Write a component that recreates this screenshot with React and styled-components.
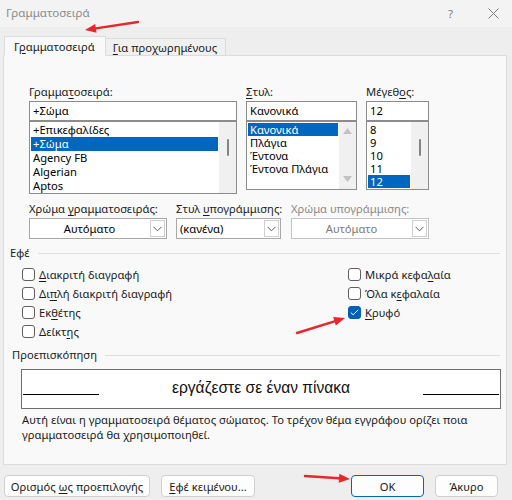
import React from 'react';
import styled, { createGlobalStyle } from 'styled-components';

const GlobalStyle = createGlobalStyle`
  html, body {
    margin: 0;
    padding: 0;
  }
  body {
    font-family: "Noto Sans", "Open Sans", sans-serif;
    font-size: 11.2px;
    color: #1b1b1b;
  }
`;

const Window = styled.div`
  position: relative;
  width: 512px;
  height: 500px;
  background: #eeeeee;
  display: flex;
  flex-direction: column;
  overflow: hidden;
`;

const TitleBar = styled.div`
  height: 27px;
  background: #f3f3f3;
  display: flex;
  align-items: center;
  padding-left: 6px;
  color: #8b8b8b;
  font-size: 11.6px;
`;

const TitleText = styled.div`
  flex: 1;
  line-height: 14px;
  margin-top: -1px;
`;

const TitleButtons = styled.div`
  display: flex;
  align-items: center;
  gap: 35px;
  padding-right: 13px;
  color: #7d7d7d;
`;

const TabStrip = styled.div`
  display: flex;
  align-items: flex-end;
  padding: 8px 0 0 4px;
  height: 20px;
`;

const Tab = styled.div`
  position: relative;
  z-index: 1;
  height: ${p => (p.$active ? '20px' : '18px')};
  line-height: ${p => (p.$active ? '20px' : '18px')};
  padding: 0 ${p => (p.$active ? '10px' : '8px')} 0 ${p => (p.$active ? '9px' : '7px')};
  background: ${p => (p.$active ? '#f9f9f9' : '#f0f0f0')};
  border: 1px solid #dcdcdc;
  border-bottom: ${p => (p.$active ? '1px solid #f9f9f9' : '1px solid #dcdcdc')};
  border-left: ${p => (p.$active ? '1px solid #dcdcdc' : 'none')};
  margin-bottom: -1px;
  box-sizing: border-box;
  color: #1b1b1b;
`;

const Key = styled.span`
  text-decoration: underline;
  text-underline-offset: 2px;
`;

const Panel = styled.div`
  margin: 0 5px 0 3px;
  height: 410px;
  box-sizing: border-box;
  border: 1px solid #dcdcdc;
  background: #f9f9f9;
  padding-top: 29px;
  display: flex;
  flex-direction: column;
`;

const FieldRow = styled.div`
  display: flex;
  padding-left: 25px;
  margin-top: ${p => p.$top || 0}px;
  gap: 9px;
`;

const Field = styled.div`
  width: ${p => p.$w}px;
  margin-right: ${p => p.$mr || 0}px;
  display: flex;
  flex-direction: column;
`;

const Label = styled.div`
  height: 14px;
  line-height: 14px;
  margin-bottom: 2px;
  color: ${p => (p.$disabled ? '#8a8a8a' : '#1b1b1b')};
  white-space: nowrap;
`;

const TextBox = styled.div`
  height: 20px;
  box-sizing: border-box;
  border: 1px solid #8c8c8c;
  background: #ffffff;
  line-height: 18px;
  padding-left: 3px;
  color: #000;
`;

const ListBox = styled.div`
  height: ${p => p.$h}px;
  box-sizing: border-box;
  border: 1px solid #8c8c8c;
  background: #ffffff;
  display: flex;
`;

const ListItems = styled.div`
  flex: 1;
  padding: 1px 1px 0 1px;
  overflow: hidden;
`;

const ListItem = styled.div`
  height: ${p => p.$h}px;
  line-height: ${p => p.$h}px;
  padding-left: 2px;
  background: ${p => (p.$selected ? '#0067c0' : 'transparent')};
  color: ${p => (p.$selected ? '#ffffff' : '#000000')};
  white-space: nowrap;
`;

const ScrollTrack = styled.div`
  width: 17px;
  background: #f0f0f0;
  display: flex;
  flex-direction: column;
  align-items: center;
  justify-content: ${p => (p.$arrows ? 'space-between' : 'flex-start')};
  padding: ${p => (p.$arrows ? '6px 0 7px' : '17px 0 0')};
  box-sizing: border-box;
`;

const Thumb = styled.div`
  width: 2px;
  height: 17px;
  background: #858585;
  border-radius: 1px;
`;

const Select = styled.div`
  height: 21px;
  box-sizing: border-box;
  border: 1px solid ${p => (p.$disabled ? '#c4c4c4' : '#a8a8a8')};
  background: #ffffff;
  display: flex;
  align-items: stretch;
`;

const SelectValue = styled.div`
  flex: 1;
  line-height: 19px;
  text-align: ${p => (p.$center ? 'center' : 'left')};
  padding-left: ${p => (p.$center ? '0' : '3px')};
  color: ${p => (p.$disabled ? '#7a7a7a' : '#000')};
`;

const ChevronBox = styled.div`
  width: 15px;
  margin: 1px;
  box-sizing: border-box;
  border: 1px solid #cfcfcf;
  display: flex;
  align-items: center;
  justify-content: center;
`;

const GroupHeader = styled.div`
  display: flex;
  align-items: center;
  gap: 8px;
  height: 14px;
  line-height: 14px;
  margin: ${p => p.$top}px 6px 0 ${p => p.$left}px;
`;

const GroupLine = styled.div`
  flex: 1;
  height: 1px;
  background: #dedede;
`;

const EffectsGrid = styled.div`
  display: grid;
  grid-template-columns: 326px auto;
  padding-left: 18px;
  margin-top: 5px;
`;

const CheckColumn = styled.div`
  display: flex;
  flex-direction: column;
`;

const CheckRow = styled.div`
  height: 19px;
  display: flex;
  align-items: center;
  gap: 4px;
  white-space: nowrap;
`;

const Box = styled.div`
  width: 13px;
  height: 13px;
  box-sizing: border-box;
  border-radius: 3px;
  border: 1px solid ${p => (p.$checked ? '#005fb8' : '#5f5f5f')};
  background: ${p => (p.$checked ? '#005fb8' : '#ffffff')};
  display: flex;
  align-items: center;
  justify-content: center;
`;

const PreviewBox = styled.div`
  margin: 7px 5px 0 17px;
  height: 40px;
  box-sizing: border-box;
  border: 1px solid #6e6e6e;
  background: #ffffff;
  display: flex;
  align-items: flex-start;
  padding: 0 1px;
`;

const PreviewRule = styled.div`
  width: 76px;
  height: 1px;
  background: #000;
  margin-top: 24px;
`;

const PreviewText = styled.div`
  flex: 1;
  text-align: center;
  font-family: "Liberation Sans", Arial, sans-serif;
  font-size: 15.6px;
  line-height: 18px;
  margin-top: 9px;
  color: #111;
`;

const Note = styled.div`
  margin: 4px 8px 0 18px;
  line-height: 14.5px;
  color: #1b1b1b;
`;

const ButtonBar = styled.div`
  display: flex;
  margin-top: 10px;
  padding: 0 14px 0 4px;
`;

const ButtonGroup = styled.div`
  display: flex;
  gap: 11px;
  margin-left: ${p => (p.$right ? 'auto' : '0')};
`;

const Button = styled.div`
  width: ${p => p.$w}px;
  height: 22px;
  box-sizing: border-box;
  border-radius: 4px;
  border: 1px solid ${p => (p.$primary ? '#0067c0' : '#d0d0d0')};
  background: #fdfdfd;
  display: flex;
  align-items: center;
  justify-content: center;
  color: #1b1b1b;
  white-space: nowrap;
`;

const Overlay = styled.svg`
  position: absolute;
  left: 0;
  top: 0;
  pointer-events: none;
`;

const Chevron = () => (
  <svg width="9" height="6" viewBox="0 0 9 6">
    <polyline points="0.5,0.8 4.5,4.8 8.5,0.8" fill="none" stroke="#5c5c5c" strokeWidth="1" />
  </svg>
);

const Check = () => (
  <svg width="9" height="7" viewBox="0 0 9 7">
    <polyline points="0.8,3.6 3.2,5.8 8.2,0.8" fill="none" stroke="#ffffff" strokeWidth="1" />
  </svg>
);

const ScrollArrow = ({ down }) => (
  <svg width="9" height="6" viewBox="0 0 9 6">
    <polygon points={down ? '0,0 9,0 4.5,6' : '0,6 9,6 4.5,0'} fill="#c2c2c2" />
  </svg>
);

const CloseIcon = () => (
  <svg width="11" height="11" viewBox="0 0 11 11">
    <path d="M0.5 0.5 L10.5 10.5 M10.5 0.5 L0.5 10.5" stroke="#7d7d7d" strokeWidth="1" />
  </svg>
);

const fonts = ['+Επικεφαλίδες', '+Σώμα', 'Agency FB', 'Algerian', 'Aptos'];
const styles = ['Κανονικά', 'Πλάγια', 'Έντονα', 'Έντονα Πλάγια'];
const sizes = ['8', '9', '10', '11', '12'];

const RedArrow = ({ x1, y1, x2, y2 }) => {
  const a = Math.atan2(y2 - y1, x2 - x1);
  const len = 11;
  const w = 4.5;
  const bx = x2 - len * Math.cos(a);
  const by = y2 - len * Math.sin(a);
  const px = -Math.sin(a) * w;
  const py = Math.cos(a) * w;
  return (
    <g>
      <line x1={x1} y1={y1} x2={bx} y2={by} stroke="#e8262b" strokeWidth="2.4" strokeLinecap="round" />
      <polygon points={`${x2},${y2} ${bx + px},${by + py} ${bx - px},${by - py}`} fill="#e8262b" />
    </g>
  );
};

export default function App() {
  return (
    <>
      <GlobalStyle />
      <Window>
        <TitleBar>
          <TitleText>Γραμματοσειρά</TitleText>
          <TitleButtons>
            <span>?</span>
            <CloseIcon />
          </TitleButtons>
        </TitleBar>

        <TabStrip>
          <Tab $active>Γ<Key>ρ</Key>αμματοσειρά</Tab>
          <Tab><Key>Γ</Key>ια προχωρημένους</Tab>
        </TabStrip>

        <Panel>
          <FieldRow>
            <Field $w={208}>
              <Label>Γραμμα<Key>τ</Key>οσειρά:</Label>
              <TextBox>+Σώμα</TextBox>
              <ListBox $h={73}>
                <ListItems>
                  {fonts.map(f => (
                    <ListItem key={f} $h={14} $selected={f === '+Σώμα'}>{f}</ListItem>
                  ))}
                </ListItems>
                <ScrollTrack>
                  <Thumb />
                </ScrollTrack>
              </ListBox>
            </Field>
            <Field $w={111}>
              <Label><Key>Σ</Key>τυλ:</Label>
              <TextBox>Κανονικά</TextBox>
              <ListBox $h={69}>
                <ListItems>
                  {styles.map(s => (
                    <ListItem key={s} $h={13} $selected={s === 'Κανονικά'}>{s}</ListItem>
                  ))}
                </ListItems>
                <ScrollTrack $arrows>
                  <ScrollArrow />
                  <ScrollArrow down />
                </ScrollTrack>
              </ListBox>
            </Field>
            <Field $w={63}>
              <Label>Μέγεθ<Key>ο</Key>ς:</Label>
              <TextBox>12</TextBox>
              <ListBox $h={69}>
                <ListItems>
                  {sizes.map(s => (
                    <ListItem key={s} $h={13} $selected={s === '12'}>{s}</ListItem>
                  ))}
                </ListItems>
                <ScrollTrack>
                  <Thumb />
                </ScrollTrack>
              </ListBox>
            </Field>
          </FieldRow>

          <FieldRow $top={8}>
            <Field $w={138}>
              <Label>Χρώμα <Key>γ</Key>ραμματοσειράς:</Label>
              <Select>
                <SelectValue $center>Αυτόματο</SelectValue>
                <ChevronBox><Chevron /></ChevronBox>
              </Select>
            </Field>
            <Field $w={105} $mr={1}>
              <Label>Στυλ <Key>υ</Key>πογράμμισης:</Label>
              <Select>
                <SelectValue>(κανένα)</SelectValue>
                <ChevronBox><Chevron /></ChevronBox>
              </Select>
            </Field>
            <Field $w={138}>
              <Label $disabled>Χρώμα υπογράμμισης:</Label>
              <Select $disabled>
                <SelectValue $center $disabled>Αυτόματο</SelectValue>
                <ChevronBox><Chevron /></ChevronBox>
              </Select>
            </Field>
          </FieldRow>

          <GroupHeader $top={7} $left={6}>
            <span>Εφέ</span>
            <GroupLine />
          </GroupHeader>

          <EffectsGrid>
            <CheckColumn>
              <CheckRow><Box /><span><Key>Δ</Key>ιακριτή διαγραφή</span></CheckRow>
              <CheckRow><Box /><span>Δι<Key>π</Key>λή διακριτή διαγραφή</span></CheckRow>
              <CheckRow><Box /><span>Εκ<Key>θ</Key>έτης</span></CheckRow>
              <CheckRow><Box /><span>Δείκτ<Key>η</Key>ς</span></CheckRow>
            </CheckColumn>
            <CheckColumn>
              <CheckRow><Box /><span>Μικρά κεφα<Key>λ</Key>αία</span></CheckRow>
              <CheckRow><Box /><span>Όλα κ<Key>ε</Key>φαλαία</span></CheckRow>
              <CheckRow><Box $checked><Check /></Box><span><Key>Κ</Key>ρυφό</span></CheckRow>
            </CheckColumn>
          </EffectsGrid>

          <GroupHeader $top={7} $left={8}>
            <span>Προεπισκόπηση</span>
            <GroupLine />
          </GroupHeader>

          <PreviewBox>
            <PreviewRule />
            <PreviewText>εργάζεστε σε έναν πίνακα</PreviewText>
            <PreviewRule />
          </PreviewBox>

          <Note>
            Αυτή είναι η γραμματοσειρά θέματος σώματος. Το τρέχον θέμα εγγράφου ορίζει ποια
            γραμματοσειρά θα χρησιμοποιηθεί.
          </Note>
        </Panel>

        <ButtonBar>
          <ButtonGroup>
            <Button $w={146}><span>Ορισμός <Key>ω</Key>ς προεπιλογής</span></Button>
            <Button $w={94}><span><Key>Ε</Key>φέ κειμένου...</span></Button>
          </ButtonGroup>
          <ButtonGroup $right>
            <Button $w={73} $primary><span>OK</span></Button>
            <Button $w={63}><span>Άκυρο</span></Button>
          </ButtonGroup>
        </ButtonBar>

        <Overlay width="512" height="500" viewBox="0 0 512 500">
          <RedArrow x1={138} y1={22} x2={85} y2={30} />
          <RedArrow x1={297} y1={333} x2={345} y2={318} />
          <RedArrow x1={305} y1={476} x2={350} y2={479} />
        </Overlay>
      </Window>
    </>
  );
}
